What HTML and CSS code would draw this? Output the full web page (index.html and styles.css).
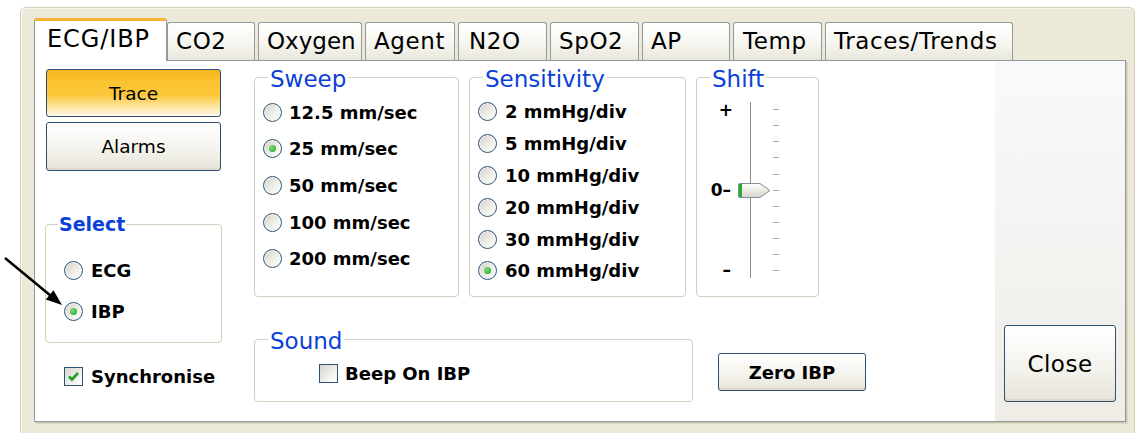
FILE: index.html
```html
<!DOCTYPE html>
<html lang="en">
<head>
    <meta charset="UTF-8">
    <title>ECG/IBP settings</title>
    <link rel="stylesheet" href="styles.css">
</head>

<body>
    <div class="window">
        <ul class="tabs">
            <li class="tab active t-ecg">ECG/IBP</li>
            <li class="tab t-co2">CO2</li>
            <li class="tab t-oxy">Oxygen</li>
            <li class="tab t-agent">Agent</li>
            <li class="tab t-n2o">N2O</li>
            <li class="tab t-spo2">SpO2</li>
            <li class="tab t-ap">AP</li>
            <li class="tab t-temp">Temp</li>
            <li class="tab t-traces">Traces/Trends</li>
        </ul>

        <div class="panel">
            <div class="left-col">
                <div class="btn btn-trace">Trace</div>
                <div class="btn btn-alarms">Alarms</div>

                <div class="group group-select">
                    <div class="legend legend-bold">Select</div>
                    <div class="rows">
                        <div class="opt"><span class="radio"></span>ECG</div>
                        <div class="opt"><span class="radio on"></span>IBP</div>
                    </div>
                </div>

                <div class="opt sync">
                    <span class="check"><svg width="17" height="17" viewBox="0 0 17 17"><path d="M4 8.5 L7 11.5 L13 5" fill="none" stroke="#21a121" stroke-width="2.6"/></svg></span>Synchronise
                </div>
            </div>

            <div class="mid">
                <div class="top-row">
                    <div class="group group-sweep">
                        <div class="legend">Sweep</div>
                        <div class="rows">
                            <div class="opt"><span class="radio"></span>12.5 mm/sec</div>
                            <div class="opt"><span class="radio on"></span>25 mm/sec</div>
                            <div class="opt"><span class="radio"></span>50 mm/sec</div>
                            <div class="opt"><span class="radio"></span>100 mm/sec</div>
                            <div class="opt"><span class="radio"></span>200 mm/sec</div>
                        </div>
                    </div>

                    <div class="group group-sens">
                        <div class="legend">Sensitivity</div>
                        <div class="rows">
                            <div class="opt"><span class="radio"></span>2 mmHg/div</div>
                            <div class="opt"><span class="radio"></span>5 mmHg/div</div>
                            <div class="opt"><span class="radio"></span>10 mmHg/div</div>
                            <div class="opt"><span class="radio"></span>20 mmHg/div</div>
                            <div class="opt"><span class="radio"></span>30 mmHg/div</div>
                            <div class="opt"><span class="radio on"></span>60 mmHg/div</div>
                        </div>
                    </div>

                    <div class="group group-shift">
                        <div class="legend">Shift</div>
                        <div class="slider">
                            <div class="scale">
                                <span>+</span>
                                <span>0&ndash;</span>
                                <span>&ndash;</span>
                            </div>
                            <svg class="track" width="47" height="180" viewBox="0 0 47 180">
                                <defs>
                                    <linearGradient id="thumbFill" x1="0" y1="0" x2="0" y2="1">
                                        <stop offset="0" stop-color="#ffffff"/>
                                        <stop offset="1" stop-color="#d6d6ca"/>
                                    </linearGradient>
                                </defs>
                                <line x1="15.5" y1="2" x2="15.5" y2="178" stroke="#8e8e86" stroke-width="1"/>
                                <line x1="16.5" y1="2" x2="16.5" y2="178" stroke="#ffffff" stroke-width="1"/>
                                <g stroke="#a8a8a0" stroke-width="1">
                                    <line x1="38" y1="9.5" x2="44" y2="9.5"/>
                                    <line x1="38" y1="25.5" x2="44" y2="25.5"/>
                                    <line x1="38" y1="41.5" x2="44" y2="41.5"/>
                                    <line x1="38" y1="57.5" x2="44" y2="57.5"/>
                                    <line x1="38" y1="74.5" x2="44" y2="74.5"/>
                                    <line x1="38" y1="90.5" x2="44" y2="90.5"/>
                                    <line x1="38" y1="106.5" x2="44" y2="106.5"/>
                                    <line x1="38" y1="122.5" x2="44" y2="122.5"/>
                                    <line x1="38" y1="138.5" x2="44" y2="138.5"/>
                                    <line x1="38" y1="154.5" x2="44" y2="154.5"/>
                                    <line x1="38" y1="170.5" x2="44" y2="170.5"/>
                                </g>
                                <path d="M4.5 83.5 H25 L35 90.5 L25 97.5 H4.5 Q3.5 97.5 3.5 96.5 V84.5 Q3.5 83.5 4.5 83.5 Z" fill="url(#thumbFill)" stroke="#7f8f9e"/>
                                <rect x="4" y="84" width="3" height="13" fill="#28ad28"/>
                            </svg>
                        </div>
                    </div>
                </div>

                <div class="bottom-row">
                    <div class="group group-sound">
                        <div class="legend">Sound</div>
                        <div class="opt beep"><span class="check"></span>Beep On IBP</div>
                    </div>
                    <div class="btn btn-zero">Zero IBP</div>
                </div>
            </div>

            <div class="side">
                <div class="btn btn-close">Close</div>
            </div>
        </div>
    </div>

    <!-- pointer drawn over the dialog -->
    <svg class="arrow" width="70" height="62" viewBox="0 0 70 62">
        <line x1="5" y1="8" x2="51" y2="46" stroke="#000" stroke-width="2.5"/>
        <polygon points="62,55 45.8,49.4 53.5,40.2" fill="#000"/>
    </svg>
</body>

</html>
```

FILE: styles.css
```css
* {
    box-sizing: border-box;
}

body {
    margin: 0;
    width: 1139px;
    height: 433px;
    overflow: hidden;
    position: relative;
    background: #fff;
    color: #000;
    font-family: "DejaVu Sans", "Liberation Sans", sans-serif;
}

.window {
    margin: 7px 0 0 20px;
    width: 1115px;
    height: 428px;
    padding: 10px 8px 0 13px;
    background: #ece9d8;
    border: 1px solid #d2cfbb;
    border-radius: 6px 6px 0 0;
    box-shadow: inset 1px 1px 0 #f8f7f0;
}

/* tab strip */
.tabs {
    list-style: none;
    margin: 0;
    padding: 0;
    display: flex;
    align-items: flex-end;
    gap: 3px;
    height: 42px;
}

.tab {
    height: 38px;
    padding-left: 8px;
    border: 1px solid #919b9c;
    border-bottom: none;
    border-radius: 3px 3px 0 0;
    background: linear-gradient(#ffffff, #f6f5f0 55%, #e9e7dc);
    font-size: 23px;
    letter-spacing: 0.6px;
    line-height: 36px;
    white-space: nowrap;
    overflow: hidden;
}

.tab.active {
    height: 43px;
    margin-bottom: -1px;
    margin-right: -3px;
    padding-left: 12px;
    position: relative;
    z-index: 1;
    background: #fff;
    border-top: 3px solid #f6b232;
    font-size: 24px;
    letter-spacing: 0.9px;
}

.t-ecg { width: 133px; }
.t-co2 { width: 88px; }
.t-oxy { width: 104px; letter-spacing: 0; padding-left: 8px; }
.t-agent { width: 90px; }
.t-n2o { width: 89px; padding-left: 10px; }
.t-spo2 { width: 89px; }
.t-ap { width: 88px; }
.t-temp { width: 89px; padding-left: 9px; }
.t-traces { width: 188px; }

/* white page under the tabs */
.panel {
    height: 362px;
    display: flex;
    background: #fff;
    border: 1px solid #919b9c;
    box-shadow: 1px 1px 0 #c9c6b3, 2px 2px 0 #dcd9c6;
}

.left-col {
    width: 177px;
    margin-left: 10px;
    padding-top: 8px;
}

/* buttons */
.btn {
    display: flex;
    align-items: center;
    justify-content: center;
    border: 1px solid #2c4f74;
    border-radius: 3px;
    background: linear-gradient(#ffffff, #f5f4ef 50%, #e7e5da);
    box-shadow: inset 0 -2px 0 #dcd8cb;
    font-size: 18.5px;
}

.btn-trace {
    width: 175px;
    height: 48px;
    margin-left: 1px;
    background: linear-gradient(#f7b51d, #fbc331 25%, #fcc73a 55%, #fde7a8 82%, #fff8e8);
    box-shadow: none;
}

.btn-alarms {
    width: 175px;
    height: 49px;
    margin: 5px 0 0 1px;
}

.btn-zero {
    width: 148px;
    height: 38px;
    margin: 14px 0 0 25px;
    font-size: 18px;
    font-weight: bold;
}

.btn-close {
    width: 112px;
    height: 77px;
    font-size: 23px;
    letter-spacing: 0.5px;
}

/* group boxes */
.group {
    border: 1px solid #d0d0bf;
    border-radius: 4px;
}

.legend {
    display: table;
    margin: -12px 0 0 13px;
    padding: 0 2px;
    background: #fff;
    color: #0a3fd8;
    font-size: 23px;
    line-height: 26px;
}

.legend-bold {
    font-size: 19px;
    font-weight: bold;
    line-height: 22px;
    margin: -12px 0 0 12px;
    padding: 0 1px;
}

.opt {
    display: flex;
    align-items: center;
    gap: 7px;
    font-size: 18px;
    font-weight: bold;
    white-space: nowrap;
}

.radio {
    flex: none;
    position: relative;
    width: 19px;
    height: 19px;
    border: 1px solid #2c5577;
    border-radius: 50%;
    background: linear-gradient(135deg, #d2d0c6, #efefea 55%, #ffffff);
    box-shadow: inset 0 0 0 1px rgba(255, 255, 255, 0.6);
}

.radio.on::after {
    content: "";
    position: absolute;
    left: 5px;
    top: 5px;
    width: 7px;
    height: 7px;
    border-radius: 50%;
    background: radial-gradient(circle at 35% 35%, #7be07b, #1f9d1f);
}

.check {
    flex: none;
    width: 19px;
    height: 19px;
    border: 1px solid #2c5478;
    background: linear-gradient(135deg, #d6d6cd, #f0f0ec 60%, #ffffff);
}

.check svg {
    display: block;
}

.group-select {
    width: 177px;
    height: 119px;
    margin-top: 53px;
}

.group-select .rows {
    padding: 15px 0 0 18px;
}

.group-select .opt {
    height: 41px;
    gap: 8px;
}

.sync {
    height: 22px;
    margin-top: 22px;
    padding-left: 19px;
    gap: 8px;
}

.mid {
    margin-left: 32px;
}

.top-row {
    display: flex;
    gap: 10px;
    margin-top: 16px;
}

.group-sweep {
    width: 205px;
    height: 220px;
}

.group-sweep .rows {
    padding: 2px 0 0 8px;
}

.group-sweep .opt {
    height: 36.6px;
}

.group-sens {
    width: 217px;
    height: 220px;
}

.group-sens .rows {
    padding: 4px 0 0 8px;
}

.group-sens .opt {
    height: 31.8px;
    gap: 8px;
}

.group-shift {
    width: 123px;
    height: 220px;
}

.slider {
    display: flex;
    margin-top: 8px;
    height: 180px;
}

.scale {
    width: 34px;
    display: flex;
    flex-direction: column;
    justify-content: space-between;
    align-items: flex-end;
    font-size: 17px;
    font-weight: bold;
    line-height: 20px;
}

.scale span:first-child {
    margin-right: -2px;
}

.track {
    display: block;
    margin-left: 4px;
}

.bottom-row {
    display: flex;
    align-items: flex-start;
    margin-top: 42px;
}

.group-sound {
    width: 439px;
    height: 63px;
}

.beep {
    height: 38px;
    padding-left: 64px;
}

.side {
    width: 130px;
    margin-left: auto;
    display: flex;
    align-items: flex-end;
    padding: 0 9px 19px 9px;
    background: linear-gradient(#f9f9fc, #f4f3f1 50%, #efede6);
}

.arrow {
    position: absolute;
    left: 0;
    top: 250px;
}
```
